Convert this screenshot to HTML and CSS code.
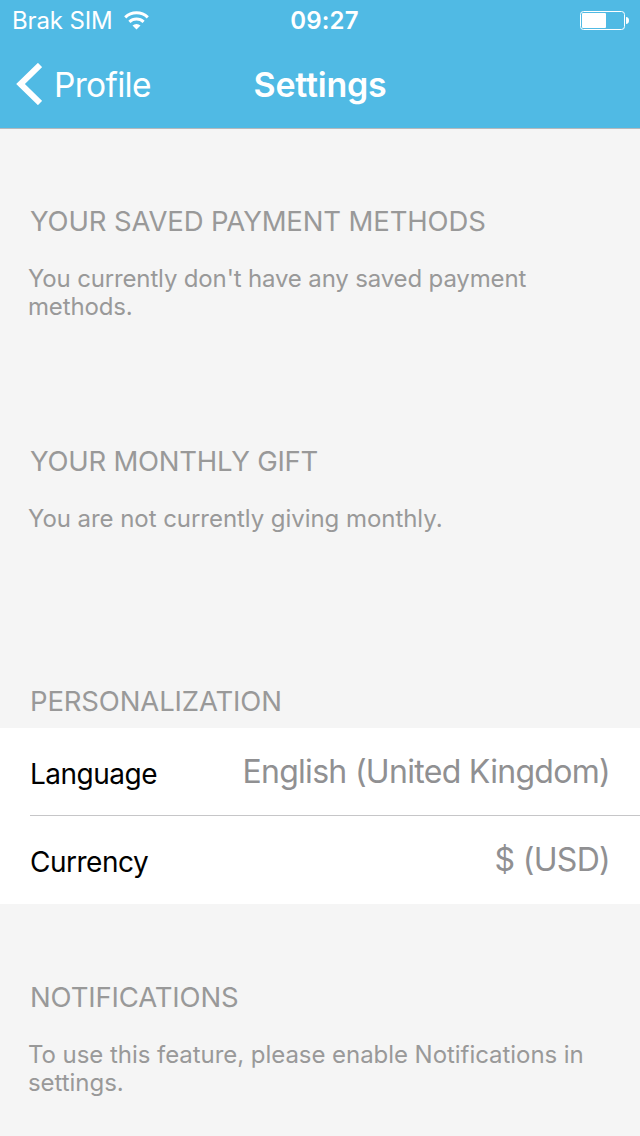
FILE: index.html
```html
<!DOCTYPE html>
<html lang="en">
<head>
    <meta charset="UTF-8">
    <meta name="viewport" content="width=device-width, initial-scale=1.0">
    <title>Settings</title>
    <link rel="stylesheet" href="styles.css">
</head>
<body>
    <header>
        <div class="status-bar">
            <div class="carrier">
                <span class="carrier-name">Brak SIM</span>
                <svg class="wifi" width="25" height="19" viewBox="0 0 25 19">
                    <path d="M1.200 6.300a16.500 16.500 0 0 1 22.600 0M5.400 10.800a10.300 10.300 0 0 1 14.200 0" fill="none" stroke="#fff" stroke-width="3"/>
                    <path d="M12.500 18.500l-4-4a5.800 5.800 0 0 1 8 0z" fill="#fff"/>
                </svg>
            </div>
            <span class="time">09:27</span>
            <svg class="battery" width="49" height="20" viewBox="0 0 49 20">
                <rect x="0.5" y="1.500" width="44" height="18" rx="3" fill="none" stroke="#fff"/>
                <rect x="2" y="3" width="24" height="15" rx="1" fill="#fff"/>
                <path d="M46 7c2 0 3 1.500 3 3.500s-1 3.500-3 3.500z" fill="#fff"/>
            </svg>
        </div>
        <nav class="nav-bar">
            <a class="back" href="#">
                <svg width="26" height="42" viewBox="0 0 26 42">
                    <path d="M24 2L4.500 21L24 40" fill="none" stroke="#fff" stroke-width="6"/>
                </svg>
                <span class="back-label">Profile</span>
            </a>
            <h1>Settings</h1>
        </nav>
    </header>

    <main>
        <section class="payments">
            <h2>YOUR SAVED PAYMENT METHODS</h2>
            <p>You currently don't have any saved payment<br>methods.</p>
        </section>
        <section class="gift">
            <h2>YOUR MONTHLY GIFT</h2>
            <p>You are not currently giving monthly.</p>
        </section>
        <section class="personalization">
            <h2>PERSONALIZATION</h2>
            <div class="list">
                <div class="row">
                    <span class="label">Language</span>
                    <span class="value">English (United Kingdom)</span>
                </div>
                <div class="row">
                    <span class="label">Currency</span>
                    <span class="value">$ (USD)</span>
                </div>
            </div>
        </section>
        <section class="notifications">
            <h2>NOTIFICATIONS</h2>
            <p>To use this feature, please enable Notifications in<br>settings.</p>
        </section>
    </main>
</body>
</html>
```
FILE: styles.css
```css
* {
    box-sizing: border-box;
}
body {
    margin: 0;
    height: 1136px;
    overflow: hidden;
    font-family: Inter, "Liberation Sans", sans-serif;
    background-color: #f5f5f5;
    color: #000;
}
header {
    height: 129px;
    color: #fff;
    background-color: #50bae4;
    border-bottom: 1px solid #b5b9bd;
}
.status-bar {
    display: grid;
    grid-template-columns: 1fr auto 1fr;
    align-items: center;
    height: 40px;
    padding: 0 11px 0 12px;
}
.carrier {
    display: flex;
    align-items: center;
    gap: 12px;
    font-size: 24px;
    letter-spacing: -0.15px;
}
.time {
    padding-left: 8px;
    font-size: 24px;
    font-weight: 600;
    letter-spacing: 0.2px;
}
.battery {
    justify-self: end;
}
.nav-bar {
    display: grid;
    grid-template-columns: 1fr auto 1fr;
    align-items: center;
    height: 88px;
    padding: 0 16px;
}
.back {
    display: flex;
    align-items: center;
    gap: 12px;
    font-size: 33.5px;
    letter-spacing: -0.7px;
    color: #fff;
    text-decoration: none;
}
.back-label {
    padding-top: 1px;
}
h1 {
    margin: 0;
    font-size: 34px;
    font-weight: 600;
    letter-spacing: -0.25px;
}
section {
    height: 240px;
    padding-top: 74px;
}
h2 {
    margin: 0;
    padding-left: 30px;
    font-size: 27.5px;
    font-weight: 400;
    line-height: 36px;
    letter-spacing: -0.14px;
    color: #999;
}
p {
    margin: 26px 28px 0;
    font-size: 24px;
    line-height: 28px;
    letter-spacing: -0.05px;
    white-space: nowrap;
    color: #999;
}
.payments p {
    letter-spacing: -0.15px;
}
.gift h2 {
    letter-spacing: -0.25px;
}
.personalization {
    height: 296px;
}
.list {
    margin-top: 9px;
    background-color: #fff;
}
.row {
    display: flex;
    justify-content: space-between;
    align-items: center;
    height: 88px;
    margin-left: 30px;
    padding-right: 30px;
}
.row:first-child {
    box-shadow: inset 0 -1px #c6c6c8;
}
.label {
    padding-top: 3px;
    font-size: 28px;
    letter-spacing: -0.5px;
}
.value {
    padding-bottom: 2px;
    font-size: 32px;
    letter-spacing: -0.7px;
    color: #909092;
}
```
